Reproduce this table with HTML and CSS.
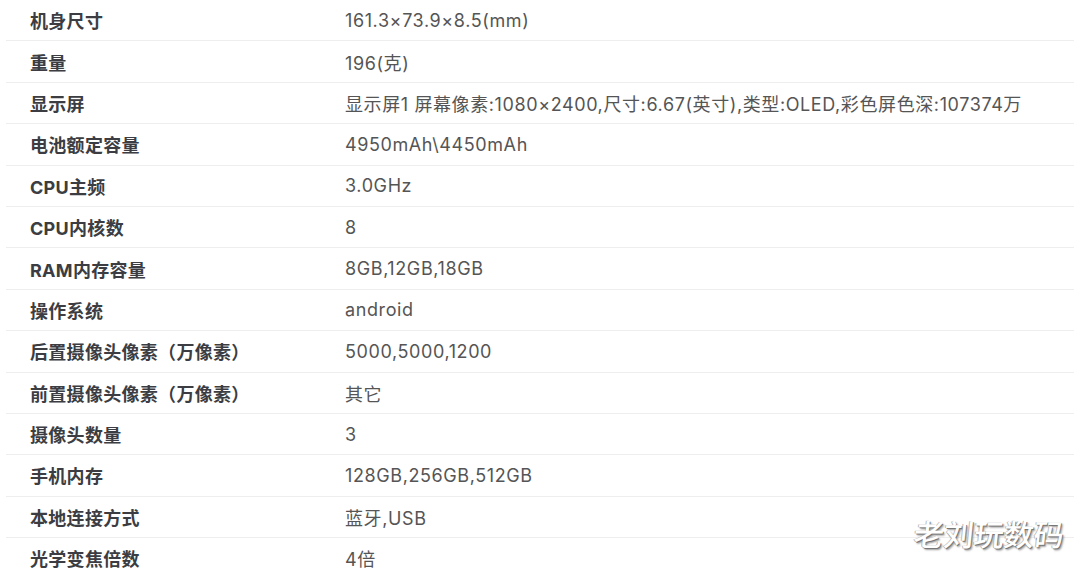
FILE: index.html
```html
<!doctype html>
<html>
    <head>
        <meta charset="utf-8">
        <title>参数</title>
        <link rel="stylesheet" href="styles.css">
    </head>
    <body>
        <div class="specs">
            <div class="row"><div class="label">机身尺寸</div><div class="value">161.3×73.9×8.5(mm)</div></div>
            <div class="row"><div class="label">重量</div><div class="value">196(克)</div></div>
            <div class="row"><div class="label">显示屏</div><div class="value">显示屏1 屏幕像素:1080×2400,尺寸:6.67(英寸),类型:OLED,彩色屏色深:107374万</div></div>
            <div class="row"><div class="label">电池额定容量</div><div class="value">4950mAh\4450mAh</div></div>
            <div class="row"><div class="label">CPU主频</div><div class="value">3.0GHz</div></div>
            <div class="row"><div class="label">CPU内核数</div><div class="value">8</div></div>
            <div class="row"><div class="label">RAM内存容量</div><div class="value">8GB,12GB,18GB</div></div>
            <div class="row"><div class="label">操作系统</div><div class="value">android</div></div>
            <div class="row"><div class="label">后置摄像头像素（万像素）</div><div class="value">5000,5000,1200</div></div>
            <div class="row"><div class="label">前置摄像头像素（万像素）</div><div class="value">其它</div></div>
            <div class="row"><div class="label">摄像头数量</div><div class="value">3</div></div>
            <div class="row"><div class="label">手机内存</div><div class="value">128GB,256GB,512GB</div></div>
            <div class="row"><div class="label">本地连接方式</div><div class="value">蓝牙,USB</div></div>
            <div class="row"><div class="label">光学变焦倍数</div><div class="value">4倍</div></div>
        </div>
        <div class="watermark">老刘玩数码</div>
    </body>
</html>
```

FILE: styles.css
```css
* {
    font-family: Inter, "Noto Sans CJK SC", sans-serif;
}

body {
    background: #fff;
    margin: 0;
    padding: 0;
    height: 573px;
    overflow: hidden;
    position: relative;
}

.specs {
    display: flex;
    flex-direction: column;
    margin: 0 6px;
}

.row {
    display: grid;
    grid-template-columns: 315px 1fr;
    align-items: center;
    height: 40.4px;
    padding-left: 24px;
    border-bottom: 1px solid #eeeeee;
    font-size: 18px;
}

.label {
    color: #3b3d42;
    font-weight: bold;
    letter-spacing: 0.3px;
}

.value {
    color: #555;
    white-space: nowrap;
    letter-spacing: 0.6px;
}

.watermark {
    position: absolute;
    right: 16px;
    bottom: 18px;
    font-size: 30px;
    color: #fff;
    font-family: "Noto Sans CJK SC", sans-serif;
    font-weight: 500;
    transform: skewX(-6deg);
    text-shadow: 1px 1px 0 #777, 2px 2px 2px #999, -1px 0 0 #bbb;
}
```
